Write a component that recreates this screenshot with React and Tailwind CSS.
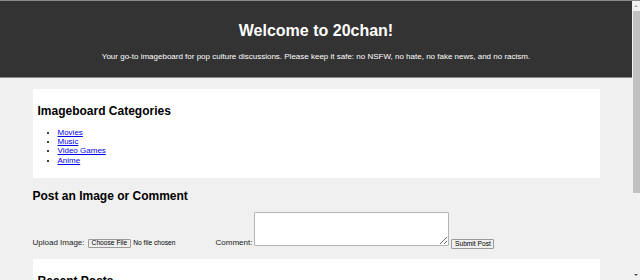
export default function App() {
  return (
    <div className="flex h-[280px] w-[640px] overflow-hidden bg-[#f0f0f0] font-['Liberation_Sans',Arial,sans-serif] text-black">
      <div className="flex min-w-0 flex-1 flex-col">
        <header className="border-t border-b border-[#8a8a8a] bg-[#333333] pt-[21px] pb-[16px] text-center text-white">
          <h1 className="text-[16px] font-bold leading-[18px]">Welcome to 20chan!</h1>
          <p className="mt-[12px] text-[8px] leading-[9px]">
            Your go-to imageboard for pop culture discussions. Please keep it safe: no NSFW, no hate, no fake news, and no racism.
          </p>
        </header>
        <div className="h-[1px] bg-white" />
        <main className="mx-auto mt-[11px] w-[567px]">
          <section className="bg-white px-[5px] pt-[15px] pb-[13px]">
            <h2 className="text-[12px] font-bold leading-[14px]">Imageboard Categories</h2>
            <ul className="mt-[10px] list-disc pl-[20px] text-[8px] leading-[9.2px]">
              <li><a href="#" className="text-[#0000ee] underline">Movies</a></li>
              <li><a href="#" className="text-[#0000ee] underline">Music</a></li>
              <li><a href="#" className="text-[#0000ee] underline">Video Games</a></li>
              <li><a href="#" className="text-[#0000ee] underline">Anime</a></li>
            </ul>
          </section>
          <section>
            <h2 className="mt-[11px] text-[12px] font-bold leading-[14px]">Post an Image or Comment</h2>
            <form className="mt-[9.5px] flex items-end" onSubmit={(e) => e.preventDefault()}>
              <span className="mb-[2.5px] text-[8px] leading-[9.2px] text-[#222]">Upload Image:</span>
              <div className="ml-[3px] flex w-[125px] items-end">
                <span className="mb-[1px] flex h-[9.6px] w-[43.7px] items-center justify-center rounded-[1px] border border-[#9a9a9a] bg-[#efefef] text-[6.67px] leading-none text-black">
                  Choose File
                </span>
                <span className="mb-[2.5px] ml-[2px] text-[6.67px] leading-[8px]">No file chosen</span>
              </div>
              <span className="ml-[3px] mb-[2.5px] text-[8px] leading-[9.2px] text-[#222]">Comment:</span>
              <textarea className="ml-[2px] mb-[3.6px] h-[33.4px] w-[195px] resize rounded-[1px] border border-[#b5b5b5] bg-white" />
              <button type="submit" className="ml-[2px] flex h-[10px] w-[43px] items-center justify-center rounded-[1px] border border-[#9a9a9a] bg-[#efefef] text-[6.67px] leading-none text-black">
                Submit Post
              </button>
            </form>
          </section>
          <section className="mt-[9.5px] bg-white px-[5px] pt-[15px] pb-[13px]">
            <h2 className="text-[12px] font-bold leading-[14px]">Recent Posts</h2>
            <div className="h-[40px]" />
          </section>
        </main>
      </div>
      <div className="flex h-[280px] w-[8px] flex-col items-center bg-[#f1f1f1] border-t border-[#8a8a8a]">
        <svg width="6" height="8" viewBox="0 0 6 8" className="mt-[1px]">
          <path d="M1 5 L3 3 L5 5 Z" fill="#a3a3a3" />
        </svg>
        <div className="ml-[1px] mt-[1px] h-[182px] w-[6.5px] bg-[#c1c1c1]" />
        <div className="flex-1" />
        <svg width="6" height="8" viewBox="0 0 6 8" className="mb-[1px]">
          <path d="M1 3 L3 5 L5 3 Z" fill="#505050" />
        </svg>
      </div>
    </div>
  );
}
